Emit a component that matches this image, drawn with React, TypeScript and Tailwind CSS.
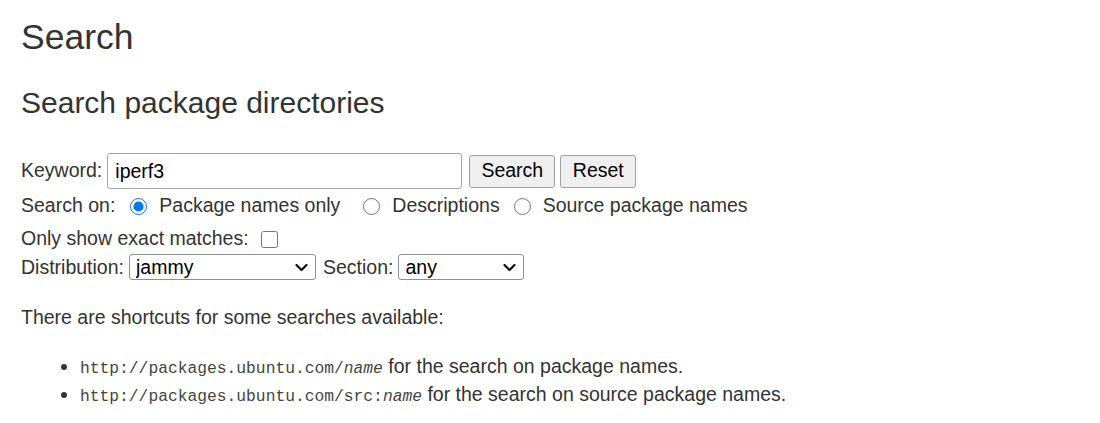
import React from "react";

const Chevron = () => (
  <svg
    className="pointer-events-none absolute right-[8px] top-1/2 -translate-y-1/2"
    width="13"
    height="9"
    viewBox="0 0 13 9"
    fill="none"
  >
    <path d="M1.5 1.5 L6.5 6.5 L11.5 1.5" stroke="#111" strokeWidth="2.2" strokeLinecap="round" strokeLinejoin="round" />
  </svg>
);

const App = () => {
  return (
    <div className="min-h-screen w-full bg-white px-[21px] text-[#333] [font-family:'Liberation_Sans',Arial,sans-serif]">
      {/* Page title */}
      <h1 className="pt-[18px] text-[35.5px] leading-[39px]">Search</h1>
      <h2 className="mt-[29px] text-[30px] leading-[34px]">Search package directories</h2>

      {/* Search form */}
      <form className="mt-[33px] text-[19.5px]" onSubmit={(e) => e.preventDefault()}>
        <div className="flex h-[36px] items-center">
          <label htmlFor="kw" className="mr-[5px]">Keyword:</label>
          <input
            id="kw"
            defaultValue="iperf3"
            className="h-[36px] w-[355px] rounded-[3px] border border-[#a5a5a5] px-[7px] text-[19.5px] text-black outline-none"
          />
          <button
            type="submit"
            className="ml-[7px] h-[33px] w-[86px] rounded-[3px] border border-[#a0a0a0] bg-[#efefef] text-[19.5px] text-black"
          >
            Search
          </button>
          <button
            type="reset"
            className="ml-[5px] h-[33px] w-[76px] rounded-[3px] border border-[#a0a0a0] bg-[#efefef] text-[19.5px] text-black"
          >
            Reset
          </button>
        </div>

        <div className="flex h-[34px] items-center">
          <span>Search on:</span>
          <input type="radio" name="on" defaultChecked className="ml-[15px] mr-[12px] h-[17px] w-[17px] accent-[#0a75e8]" />
          <span>Package names only</span>
          <input type="radio" name="on" className="ml-[23px] mr-[12px] h-[17px] w-[17px]" />
          <span>Descriptions</span>
          <input type="radio" name="on" className="ml-[14px] mr-[12px] h-[17px] w-[17px]" />
          <span>Source package names</span>
        </div>

        <div className="flex h-[32px] items-center">
          <span>Only show exact matches:</span>
          <input type="checkbox" className="ml-[12px] h-[17px] w-[17px]" />
        </div>

        <div className="flex h-[26px] items-center">
          <span className="mr-[5px]">Distribution:</span>
          <div className="relative">
            <select
              defaultValue="jammy"
              className="h-[26px] w-[187px] appearance-none rounded-[3px] border border-[#8f8f8f] bg-white pl-[6px] text-[19.5px] leading-[24px] text-black"
            >
              <option value="jammy">jammy</option>
              <option value="focal">focal</option>
              <option value="noble">noble</option>
            </select>
            <Chevron />
          </div>
          <span className="ml-[7px] mr-[5px]">Section:</span>
          <div className="relative">
            <select
              defaultValue="any"
              className="h-[26px] w-[126px] appearance-none rounded-[3px] border border-[#8f8f8f] bg-white pl-[6px] text-[19.5px] leading-[24px] text-black"
            >
              <option value="any">any</option>
              <option value="main">main</option>
              <option value="universe">universe</option>
            </select>
            <Chevron />
          </div>
        </div>
      </form>

      {/* Shortcuts */}
      <p className="mt-[25px] text-[19.5px] leading-[22px]">There are shortcuts for some searches available:</p>
      <ul className="mt-[24px] list-disc pl-[59px] text-[19.5px] leading-[28px]">
        <li>
          <code className="text-[16.3px] leading-none text-[#444] [font-family:'Liberation_Mono',monospace]">
            http://packages.ubuntu.com/<em>name</em>
          </code>{" "}
          for the search on package names.
        </li>
        <li>
          <code className="text-[16.3px] leading-none text-[#444] [font-family:'Liberation_Mono',monospace]">
            http://packages.ubuntu.com/src:<em>name</em>
          </code>{" "}
          for the search on source package names.
        </li>
      </ul>
    </div>
  );
};

export default App;
